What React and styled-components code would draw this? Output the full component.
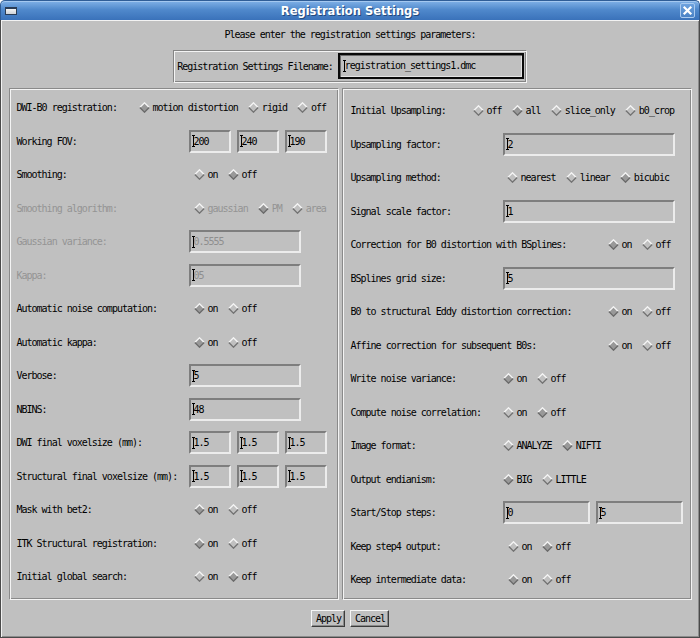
import React from 'react';
import styled, { createGlobalStyle } from 'styled-components';

const GRAY = '#c0c0c0';
const MONO = `"DejaVu Sans Mono", "Liberation Mono", monospace`;

const leftRows = [
  { label: 'DWI-B0 registration:', labelWidth: 122, radios: ['motion distortion', 'rigid', 'off'], selected: 0, inset: 0 },
  { label: 'Working FOV:', entries: ['200', '240', '190'] },
  { label: 'Smoothing:', radios: ['on', 'off'], selected: 1 },
  { label: 'Smoothing algorithm:', radios: ['gaussian', 'PM', 'area'], selected: 1, disabled: true },
  { label: 'Gaussian variance:', entries: ['0.5555'], entryWidth: 112, disabled: true },
  { label: 'Kappa:', entries: ['05'], entryWidth: 112, disabled: true },
  { label: 'Automatic noise computation:', radios: ['on', 'off'], selected: 0 },
  { label: 'Automatic kappa:', radios: ['on', 'off'], selected: 0 },
  { label: 'Verbose:', entries: ['5'], entryWidth: 112 },
  { label: 'NBINS:', entries: ['48'], entryWidth: 112 },
  { label: 'DWI final voxelsize (mm):', entries: ['1.5', '1.5', '1.5'] },
  { label: 'Structural final voxelsize (mm):', entries: ['1.5', '1.5', '1.5'] },
  { label: 'Mask with bet2:', radios: ['on', 'off'], selected: 0 },
  { label: 'ITK Structural registration:', radios: ['on', 'off'], selected: 0 },
  { label: 'Initial global search:', radios: ['on', 'off'], selected: 1 },
];

const rightRows = [
  { label: 'Initial Upsampling:', labelWidth: 122, radios: ['off', 'all', 'slice_only', 'b0_crop'], selected: 1, inset: 0 },
  { label: 'Upsampling factor:', entries: ['2'], entryWidth: 172 },
  { label: 'Upsampling method:', radios: ['nearest', 'linear', 'bicubic'], selected: 2, inset: 4 },
  { label: 'Signal scale factor:', entries: ['1'], entryWidth: 172 },
  { label: 'Correction for B0 distortion with BSplines:', labelWidth: 257, radios: ['on', 'off'], selected: 0, inset: 0 },
  { label: 'BSplines grid size:', entries: ['5'], entryWidth: 172 },
  { label: 'B0 to structural Eddy distortion correction:', labelWidth: 257, radios: ['on', 'off'], selected: 0, inset: 0 },
  { label: 'Affine correction for subsequent B0s:', labelWidth: 257, radios: ['on', 'off'], selected: 0, inset: 0 },
  { label: 'Write noise variance:', radios: ['on', 'off'], selected: 0, inset: 0 },
  { label: 'Compute noise correlation:', radios: ['on', 'off'], selected: 1, inset: 0 },
  { label: 'Image format:', radios: ['ANALYZE', 'NIFTI'], selected: 1, inset: 0 },
  { label: 'Output endianism:', radios: ['BIG', 'LITTLE'], selected: 0, inset: 0 },
  { label: 'Start/Stop steps:', entries: ['0', '5'], entryWidth: 87 },
  { label: 'Keep step4 output:', radios: ['on', 'off'], selected: 1, inset: 5 },
  { label: 'Keep intermediate data:', radios: ['on', 'off'], selected: 0, inset: 5 },
];

export default function App() {
  return (
    <>
      <GlobalStyle />
      <Window>
        <TitleBar>
          <WindowIcon />
          <Title>Registration Settings</Title>
          <CloseButton>
            <svg width="13" height="13" viewBox="0 0 13 13">
              <path d="M3.5 3.5 L9.5 9.5 M9.5 3.5 L3.5 9.5" stroke="#fff" strokeWidth="2.2" strokeLinecap="square" />
            </svg>
          </CloseButton>
        </TitleBar>

        <Body>
          <Intro>Please enter the registration settings parameters:</Intro>

          <FileFrame>
            <span>Registration Settings Filename:</span>
            <FocusEntry>
              <Caret />
              registration_settings1.dmc
            </FocusEntry>
          </FileFrame>

          <Panels>
            <Panel $width={330} $padTop={2} $padLeft={7}>
              {leftRows.map((row) => (
                <SettingRow key={row.label} row={row} labelWidth={172} defaultInset={5} />
              ))}
            </Panel>
            <Panel $width={350} $padTop={5} $padLeft={8}>
              {rightRows.map((row) => (
                <SettingRow key={row.label} row={row} labelWidth={152} defaultInset={0} />
              ))}
            </Panel>
          </Panels>

          <ButtonBar>
            <Button>Apply</Button>
            <Button>Cancel</Button>
          </ButtonBar>
        </Body>
      </Window>
    </>
  );
}

function SettingRow({ row, labelWidth, defaultInset }) {
  return (
    <Row>
      <Label $width={row.labelWidth ?? labelWidth} $disabled={row.disabled}>
        {row.label}
      </Label>
      {row.radios && (
        <RadioGroup $inset={row.inset ?? defaultInset}>
          {row.radios.map((opt, i) => (
            <Radio key={opt} $disabled={row.disabled}>
              <Diamond on={i === row.selected} />
              {opt}
            </Radio>
          ))}
        </RadioGroup>
      )}
      {row.entries && (
        <EntryGroup>
          {row.entries.map((val, i) => (
            <Entry key={i} $width={row.entryWidth ?? 42} $disabled={row.disabled}>
              <Caret />
              {val}
            </Entry>
          ))}
        </EntryGroup>
      )}
    </Row>
  );
}

// Tk style diamond indicator
function Diamond({ on }) {
  return (
    <svg width="11" height="11" viewBox="0 0 11 11">
      <polygon points="5.5,0.8 10.2,5.5 5.5,10.2 0.8,5.5" fill={on ? '#999999' : GRAY} />
      <polyline points="0.8,5.5 5.5,0.8 10.2,5.5" fill="none" stroke="#f6f6f6" strokeWidth="1.3" />
      <polyline points="0.8,5.5 5.5,10.2 10.2,5.5" fill="none" stroke={on ? '#6a6a6a' : '#727272'} strokeWidth="1.3" />
    </svg>
  );
}

const GlobalStyle = createGlobalStyle`
  html, body {
    margin: 0;
    padding: 0;
    background: #ffffff;
  }
  body {
    font-family: ${MONO};
  }
`;

const Window = styled.div`
  width: 700px;
  height: 638px;
  display: flex;
  flex-direction: column;
  overflow: hidden;
  font-family: ${MONO};
  font-size: 10px;
  letter-spacing: -1px;
  color: #000;
`;

const TitleBar = styled.div`
  flex: none;
  height: 20px;
  box-sizing: border-box;
  display: grid;
  grid-template-columns: 1fr auto 1fr;
  align-items: center;
  padding: 0 4px;
  background: linear-gradient(#80b1e7, #5089cc 45%, #3a72ba);
  border: 1px solid #2f5d97;
  border-bottom: none;
  border-radius: 5px 5px 0 0;
  box-shadow: inset 0 1px 0 #a4c8f0;
`;

const WindowIcon = styled.div`
  width: 12px;
  height: 8px;
  box-sizing: border-box;
  border: 1px solid #2a3c55;
  border-top-width: 2px;
  background: linear-gradient(#f4f4f4, #cfd3d8);
`;

const Title = styled.div`
  font-family: "DejaVu Sans", "Liberation Sans", sans-serif;
  font-weight: bold;
  font-size: 11.5px;
  letter-spacing: 0;
  color: #ffffff;
  text-shadow: 1px 1px 0 #23497c;
`;

const CloseButton = styled.div`
  justify-self: end;
  width: 13px;
  height: 13px;
  display: flex;
  border: 1px solid #a9c9ee;
  border-radius: 2px;
  background: linear-gradient(#6da2de, #4a82c6);
  svg {
    display: block;
  }
`;

const Body = styled.div`
  flex: 1;
  display: flex;
  flex-direction: column;
  align-items: center;
  background: ${GRAY};
  border: 1px solid #4a4a4a;
  border-top: none;
  box-shadow: inset 1px 1px 0 #f2f2f2, inset -1px -1px 0 #8c8c8c;
`;

const Intro = styled.div`
  margin-top: 8px;
  height: 14px;
  line-height: 14px;
`;

const FileFrame = styled.div`
  margin-top: 8px;
  display: flex;
  align-items: center;
  gap: 5px;
  padding: 2px 2px 3px 3px;
  border: 1px solid;
  border-color: #858585 #f4f4f4 #f4f4f4 #858585;
  box-shadow: inset 1px 1px 0 #f4f4f4, inset -1px -1px 0 #858585;
`;

const FocusEntry = styled.div`
  position: relative;
  width: 186px;
  height: 26px;
  box-sizing: border-box;
  border: 2px solid #0a0a0a;
  box-shadow: inset 1px 1px 0 #6c6c6c, inset -1px -1px 0 #e4e4e4;
  padding-left: 5px;
  line-height: 22px;
`;

const Caret = styled.span`
  position: absolute;
  left: 3px;
  top: 50%;
  margin-top: -6px;
  width: 3px;
  height: 12px;
  box-sizing: border-box;
  border-top: 1px solid #000;
  border-bottom: 1px solid #000;
  &::before {
    content: '';
    position: absolute;
    left: 1px;
    top: 0;
    bottom: 0;
    width: 1px;
    background: #000;
  }
`;

const Panels = styled.div`
  margin-top: 5px;
  display: flex;
  gap: 3px;
`;

const Panel = styled.div`
  width: ${(p) => p.$width}px;
  height: 512px;
  box-sizing: border-box;
  padding: ${(p) => p.$padTop}px 0 0 ${(p) => p.$padLeft}px;
  border: 1px solid;
  border-color: #8a8a8a #f4f4f4 #f4f4f4 #8a8a8a;
  box-shadow: inset 1px 1px 0 #f4f4f4, inset -1px -1px 0 #8a8a8a;
`;

const Row = styled.div`
  height: 33.5px;
  display: flex;
  align-items: center;
`;

const Label = styled.div`
  flex: none;
  width: ${(p) => p.$width}px;
  white-space: nowrap;
  color: ${(p) => (p.$disabled ? '#949494' : '#000')};
`;

const RadioGroup = styled.div`
  display: flex;
  align-items: center;
  gap: 10px;
  padding-left: ${(p) => p.$inset}px;
`;

const Radio = styled.div`
  display: flex;
  align-items: center;
  gap: 3px;
  white-space: nowrap;
  color: ${(p) => (p.$disabled ? '#949494' : '#000')};
  svg {
    display: block;
  }
`;

const EntryGroup = styled.div`
  display: flex;
  gap: 6px;
`;

const Entry = styled.div`
  position: relative;
  width: ${(p) => p.$width}px;
  height: 23px;
  box-sizing: border-box;
  border: 2px solid;
  border-color: #7e7e7e #ececec #ececec #7e7e7e;
  padding-left: 3px;
  line-height: 19px;
  color: ${(p) => (p.$disabled ? '#8e8e8e' : '#000')};
  ${Caret} {
    left: 1px;
  }
`;

const ButtonBar = styled.div`
  margin-top: 10px;
  display: flex;
  gap: 5px;
`;

const Button = styled.button`
  height: 17px;
  margin: 0;
  padding: 0 3px 0 4px;
  font-family: ${MONO};
  font-size: 10px;
  letter-spacing: -1px;
  color: #000;
  background: ${GRAY};
  border: 1px solid;
  border-color: #f6f6f6 #3c3c3c #3c3c3c #f6f6f6;
  box-shadow: inset -1px -1px 0 #8a8a8a;
  border-radius: 0;
  cursor: pointer;
`;
